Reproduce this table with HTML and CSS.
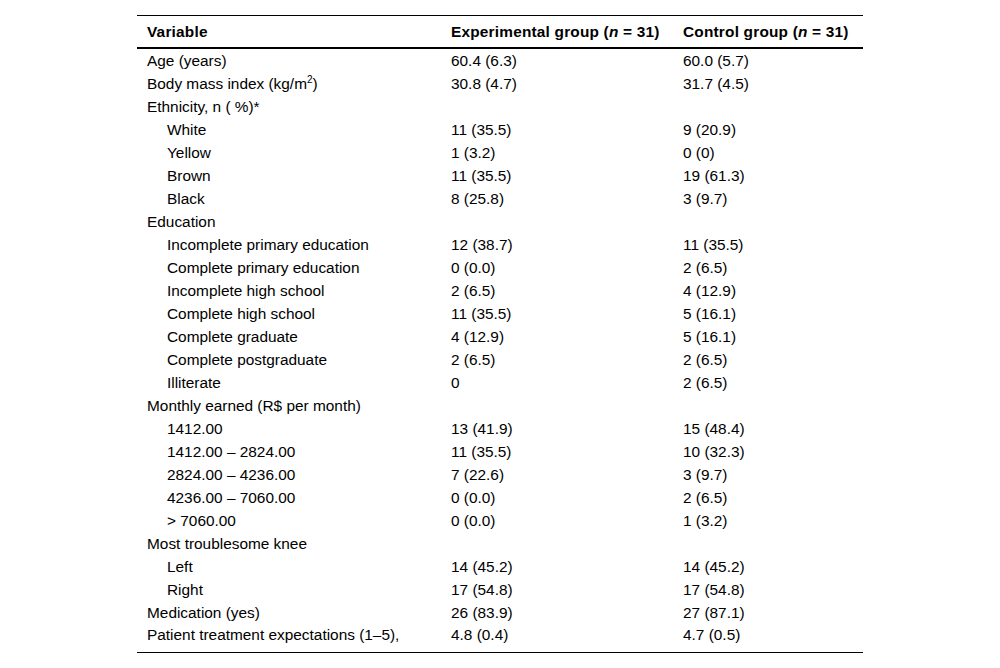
FILE: index.html
```html
<!DOCTYPE html>
<html>
<head>
<meta charset="utf-8">
<link rel="stylesheet" href="styles.css">
</head>
<body>
<table class="data">
<thead>
<tr><th class="c1">Variable</th><th class="c2">Experimental group (<i>n</i> = 31)</th><th class="c3">Control group (<i>n</i> = 31)</th></tr>
</thead>
<tbody>
<tr><td>Age (years)</td><td>60.4 (6.3)</td><td>60.0 (5.7)</td></tr>
<tr><td>Body mass index (kg/m<sup>2</sup>)</td><td>30.8 (4.7)</td><td>31.7 (4.5)</td></tr>
<tr><td>Ethnicity, n ( %)*</td><td></td><td></td></tr>
<tr><td class="ind">White</td><td>11 (35.5)</td><td>9 (20.9)</td></tr>
<tr><td class="ind">Yellow</td><td>1 (3.2)</td><td>0 (0)</td></tr>
<tr><td class="ind">Brown</td><td>11 (35.5)</td><td>19 (61.3)</td></tr>
<tr><td class="ind">Black</td><td>8 (25.8)</td><td>3 (9.7)</td></tr>
<tr><td>Education</td><td></td><td></td></tr>
<tr><td class="ind">Incomplete primary education</td><td>12 (38.7)</td><td>11 (35.5)</td></tr>
<tr><td class="ind">Complete primary education</td><td>0 (0.0)</td><td>2 (6.5)</td></tr>
<tr><td class="ind">Incomplete high school</td><td>2 (6.5)</td><td>4 (12.9)</td></tr>
<tr><td class="ind">Complete high school</td><td>11 (35.5)</td><td>5 (16.1)</td></tr>
<tr><td class="ind">Complete graduate</td><td>4 (12.9)</td><td>5 (16.1)</td></tr>
<tr><td class="ind">Complete postgraduate</td><td>2 (6.5)</td><td>2 (6.5)</td></tr>
<tr><td class="ind">Illiterate</td><td>0</td><td>2 (6.5)</td></tr>
<tr><td>Monthly earned (R$ per month)</td><td></td><td></td></tr>
<tr><td class="ind">1412.00</td><td>13 (41.9)</td><td>15 (48.4)</td></tr>
<tr><td class="ind">1412.00 – 2824.00</td><td>11 (35.5)</td><td>10 (32.3)</td></tr>
<tr><td class="ind">2824.00 – 4236.00</td><td>7 (22.6)</td><td>3 (9.7)</td></tr>
<tr><td class="ind">4236.00 – 7060.00</td><td>0 (0.0)</td><td>2 (6.5)</td></tr>
<tr><td class="ind">&gt; 7060.00</td><td>0 (0.0)</td><td>1 (3.2)</td></tr>
<tr><td>Most troublesome knee</td><td></td><td></td></tr>
<tr><td class="ind">Left</td><td>14 (45.2)</td><td>14 (45.2)</td></tr>
<tr><td class="ind">Right</td><td>17 (54.8)</td><td>17 (54.8)</td></tr>
<tr><td>Medication (yes)</td><td>26 (83.9)</td><td>27 (87.1)</td></tr>
<tr class="last"><td>Patient treatment expectations (1–5),</td><td>4.8 (0.4)</td><td>4.7 (0.5)</td></tr>
</tbody>
</table>
</body>
</html>
```
FILE: styles.css
```css
html, body {
  margin: 0;
  padding: 0;
  background: #fff;
}
body {
  padding-top: 15px;
  font-family: "Liberation Sans", Arial, sans-serif;
  font-size: 15.4px;
  color: #000;
}
.data {
  width: 726px;
  margin: 0 auto;
  border-collapse: collapse;
  border-top: 1px solid #000;
  border-bottom: 1.5px solid #000;
}
.data th {
  text-align: left;
  font-weight: bold;
  height: 31px;
  padding: 0 10px;
  border-bottom: 2px solid #000;
  vertical-align: middle;
  line-height: 18px;
  letter-spacing: 0.2px;
}
.data th i { font-weight: bold; }
.data td {
  height: 23px;
  padding: 0 10px;
  vertical-align: middle;
  line-height: 18px;
}
.data tr.last td {
  height: 26px;
  vertical-align: top;
  padding-top: 2px;
}
.data .c1 { width: 284px; }
.data .c2 { width: 212px; }
.data td.ind { padding-left: 30px; }
.data sup {
  font-size: 10px;
  line-height: 0;
  vertical-align: 6px;
}
```
